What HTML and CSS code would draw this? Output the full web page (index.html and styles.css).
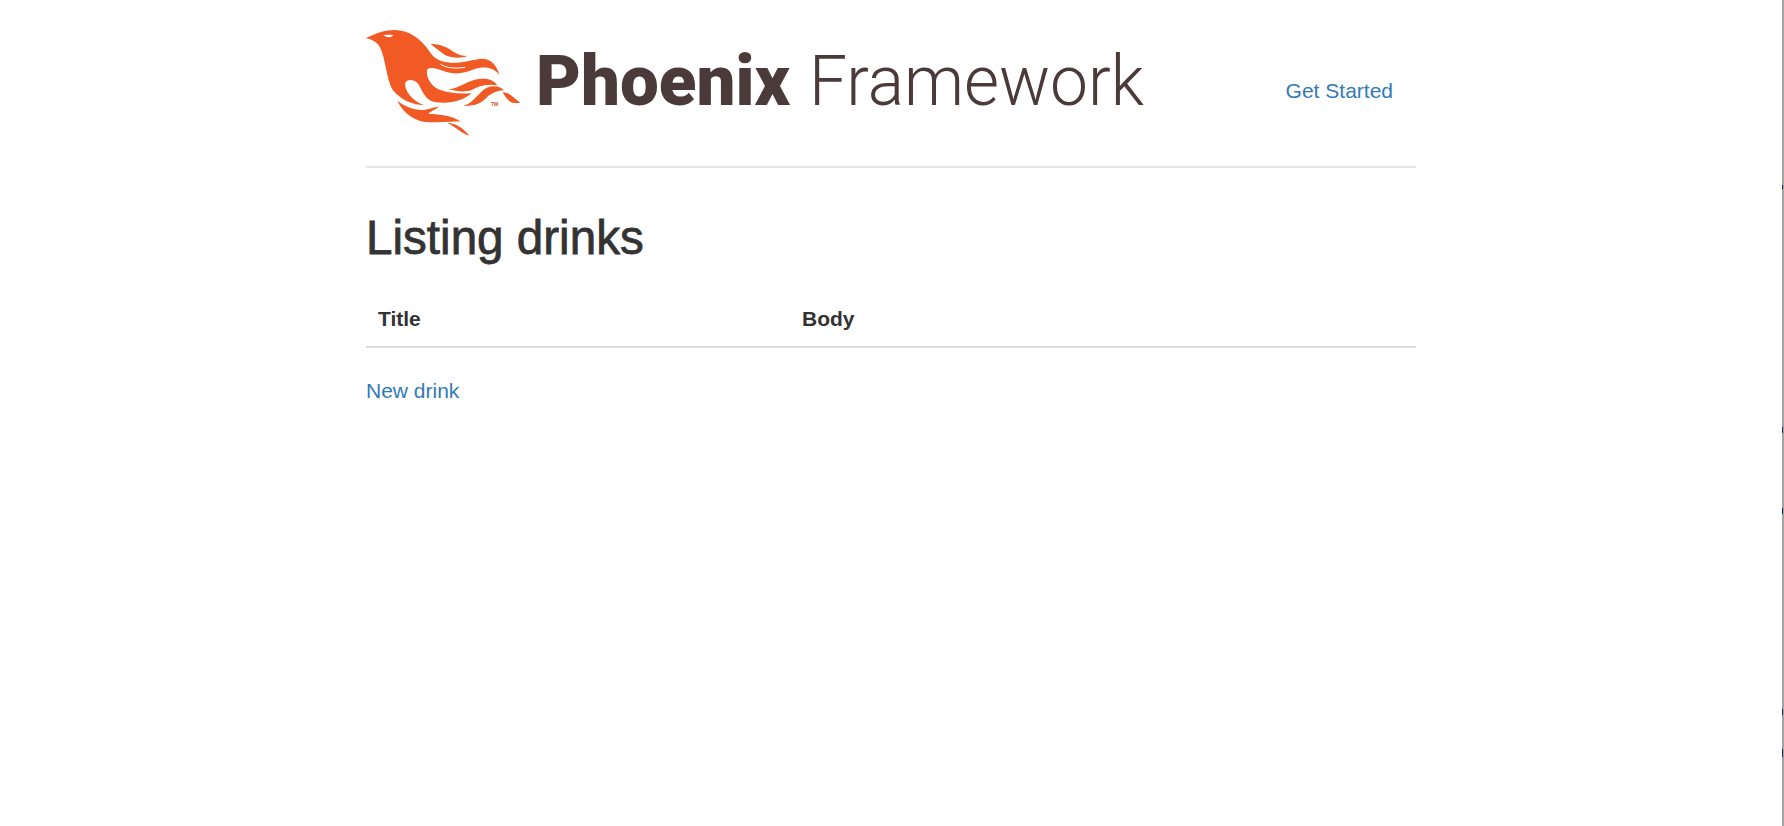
FILE: index.html
```html
<!DOCTYPE html>
<html lang="en">
<head>
  <meta charset="UTF-8" />
  <meta name="viewport" content="width=device-width, initial-scale=1.0" />
  <title>Listing drinks</title>
  <link rel="stylesheet" href="styles.css">
</head>
<body>
  <div class="container">
    <header class="header">
      <svg class="logo" width="810" height="110" viewBox="0 0 810 110" role="img" aria-label="Phoenix Framework">
        <!-- bird traced at 3x, shifted so the beak sits at the left edge -->
        <g transform="scale(0.3333) translate(-48 -60)" fill="#f15a24">
          <path d="M48 85 C75 70 105 60 135 60 C175 60 212 85 237 122 C252 146 272 156 302 158 C340 160 368 148 396 146 C424 146 442 168 448 195 C430 172 402 168 372 178 C345 190 315 194 290 186 C270 180 245 168 232 178 C226 197 240 225 265 238 C295 250 330 252 365 250 C340 272 295 285 250 275 C225 268 218 245 205 222 C195 208 172 205 166 218 C162 240 185 272 222 285 C190 285 155 272 128 240 C108 205 108 150 90 112 C82 97 65 88 48 85 Z"/>
          <path d="M242 102 C265 100 290 110 310 125 C325 135 340 138 352 138 C335 145 305 145 285 135 C270 125 255 112 242 102 Z"/>
          <path d="M295 238 C330 235 350 212 385 207 C415 203 432 210 442 226 C410 220 385 228 365 240 C340 248 320 243 295 238 Z"/>
          <path d="M340 287 C370 280 385 248 410 233 C430 226 450 228 462 241 C435 243 418 253 405 268 C388 284 365 289 340 287 Z"/>
          <path d="M458 247 C478 246 492 265 511 278 C488 283 472 275 458 247 Z"/>
          <path d="M142 272 C165 290 190 298 215 300 C235 300 250 290 268 290 C255 298 240 305 235 312 C270 312 310 318 332 335 C300 333 265 338 235 337 C195 335 160 310 142 272 Z"/>
          <path d="M292 338 C320 340 340 355 358 377 C335 370 315 350 292 338 Z"/>
          <path d="M100 76 C110 74 122 74 130 76 C124 84 110 84 100 76 Z" fill="#fff"/>
          <path d="M272 163 C290 175 320 176 345 172" fill="none" stroke="#fff" stroke-width="3"/>
        </g>
        <text class="logo-tm" x="125" y="76">TM</text>
        <text class="logo-bold" x="170" y="75" textLength="254" lengthAdjust="spacingAndGlyphs">Phoenix</text>
        <text class="logo-light" x="443" y="75" textLength="335" lengthAdjust="spacingAndGlyphs">Framework</text>
      </svg>
      <nav class="nav"><a href="#">Get Started</a></nav>
    </header>

    <main>
      <h2>Listing drinks</h2>
      <table class="table">
        <thead>
          <tr>
            <th class="col-title">Title</th>
            <th>Body</th>
          </tr>
        </thead>
      </table>
      <a class="new-link" href="#">New drink</a>
    </main>
  </div>

  <div class="edge">
    <span class="mark mark-a"></span>
    <span class="mark mark-b"></span>
    <span class="mark mark-c"></span>
    <span class="mark mark-d"></span>
    <span class="mark mark-e"></span>
  </div>
</body>
</html>
```

FILE: styles.css
```css
body { margin: 0; background: #fff; color: #333; font-family: "Liberation Sans", Arial, sans-serif; font-size: 21px; }
a { color: #337ab7; text-decoration: none; }

.container { width: 1050px; margin-left: 366px; }

.header { display: flex; justify-content: space-between; padding-top: 30px; height: 136px; border-bottom: 2px solid #e5e5e5; }
.logo { display: block; flex: none; }
.logo-bold { font-family: Roboto, sans-serif; font-size: 70px; font-weight: 900; fill: #4a3a39; }
.logo-light { font-family: Roboto, sans-serif; font-size: 70px; font-weight: 300; fill: #4a3a39; }
.logo-tm { font-family: "Liberation Sans", sans-serif; font-size: 5px; font-weight: bold; fill: #c9562c; }
.nav { padding: 49px 23px 0 0; line-height: 24px; }

h2 { margin: 0; padding-top: 40px; font-size: 47.6px; font-weight: normal; line-height: 60px; -webkit-text-stroke: 0.8px #333; }

.table { width: 100%; border-collapse: collapse; margin-top: 33px; }
.table th { padding: 0 12px 10px; height: 35px; text-align: left; font-weight: bold; line-height: 24px; border-bottom: 2px solid #ddd; }
.col-title { width: 400px; }

.new-link { display: block; margin-top: 31px; line-height: 24px; }

.edge { position: fixed; top: 0; right: 0; bottom: 0; width: 2px; background: #a3a3a3; }
.mark { position: absolute; left: 0; width: 1px; height: 4px; background: #1a2a50; }
.mark-a { top: 185px; }
.mark-b { top: 427px; height: 6px; }
.mark-c { top: 508px; height: 6px; }
.mark-d { top: 709px; height: 6px; }
.mark-e { top: 749px; height: 8px; }
```
